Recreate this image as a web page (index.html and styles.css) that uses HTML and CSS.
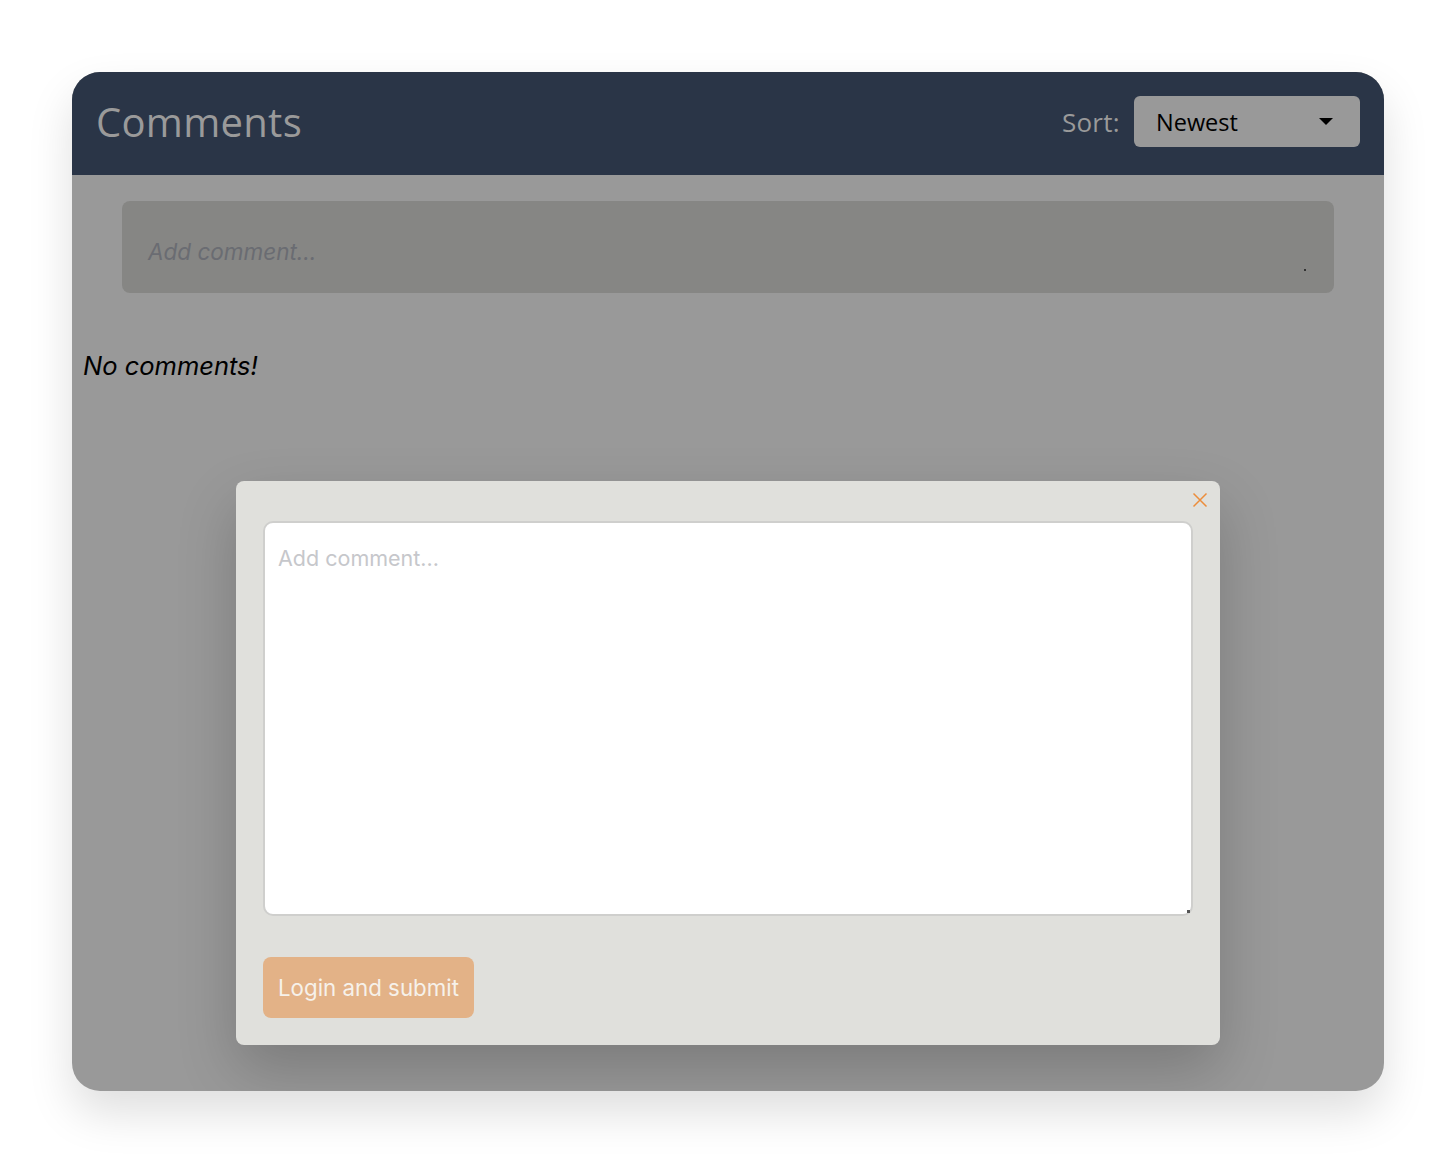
FILE: index.html
```html
<!DOCTYPE html>
<html>
<head>
<meta charset="utf-8">
<link rel="stylesheet" href="styles.css">
</head>
<body>
<div class="window">
  <header class="header">
    <h1 class="title">Comments</h1>
    <div class="sort">
      <span class="sort-label">Sort:</span>
      <div class="select">
        <span>Newest</span>
        <span class="caret"></span>
      </div>
    </div>
  </header>
  <div class="content">
    <div class="add-box"><span class="add-ph">Add comment...</span><span class="grip"></span></div>
    <p class="empty">No comments!</p>
  </div>
  <div class="modal">
    <button class="close" aria-label="Close">
      <svg width="16" height="16" viewBox="0 0 16 16"><path d="M1.5 1.5 L14.5 14.5 M14.5 1.5 L1.5 14.5" stroke="#ec8d3b" stroke-width="1.5" fill="none"/></svg>
    </button>
    <div class="textarea"><span class="ta-ph">Add comment...</span><span class="ta-grip"></span></div>
    <button class="submit">Login and submit</button>
  </div>
</div>
</body>
</html>
```

FILE: styles.css
```css
html, body {
  margin: 0;
  padding: 0;
  background: #ffffff;
}
body {
  padding: 72px 0 73px;
  font-family: Inter, "Noto Sans", sans-serif;
}
.window {
  position: relative;
  width: 1312px;
  height: 1019px;
  margin: 0 auto;
  border-radius: 28px;
  overflow: hidden;
  background: #999999;
  box-shadow: 0 22px 45px rgba(0, 0, 0, 0.13);
}
.header {
  height: 103px;
  background: #2a3547;
  display: flex;
  align-items: center;
  justify-content: space-between;
  padding: 0 24px;
  box-sizing: border-box;
}
.title {
  margin: -4px 0 0;
  font-family: "Open Sans", "DejaVu Sans", sans-serif;
  font-weight: 400;
  font-size: 40px;
  color: #9a9a9a;
  letter-spacing: 0.3px;
}
.sort {
  display: flex;
  align-items: center;
  gap: 14px;
  margin-top: -4px;
}
.sort-label {
  font-family: "Open Sans", "DejaVu Sans", sans-serif;
  font-size: 26px;
  color: #9a9a9a;
  letter-spacing: 0.3px;
}
.select {
  width: 226px;
  height: 51px;
  box-sizing: border-box;
  background: #999999;
  border-radius: 6px;
  display: flex;
  align-items: center;
  justify-content: space-between;
  padding: 0 27px 0 22px;
  font-family: "Open Sans", "DejaVu Sans", sans-serif;
  font-size: 23.5px;
  color: #000;
}
.caret {
  width: 0;
  height: 0;
  border-left: 7px solid transparent;
  border-right: 7px solid transparent;
  border-top: 7px solid #000;
}
.content {
  padding: 26px 50px 0;
}
.add-box {
  position: relative;
  height: 92px;
  background: #868684;
  border-radius: 8px;
  display: flex;
  align-items: center;
  padding: 8px 0 0 26px;
  box-sizing: border-box;
}
.add-ph {
  font-style: italic;
  font-size: 22.5px;
  color: #6a6c72;
}
.grip {
  position: absolute;
  right: 28px;
  bottom: 22px;
  width: 2px;
  height: 2px;
  background: #333;
}
.empty {
  margin: 57px 0 0 -39px;
  font-style: italic;
  font-size: 25.5px;
  color: #000;
}
.modal {
  position: absolute;
  left: 164px;
  top: 409px;
  width: 984px;
  height: 564px;
  box-sizing: border-box;
  background: #e0e0dc;
  border-radius: 8px;
  padding: 40px 27px 27px;
  display: flex;
  flex-direction: column;
  align-items: flex-start;
  box-shadow: 0 25px 60px rgba(0, 0, 0, 0.2);
}
.close {
  position: absolute;
  top: 11px;
  right: 12px;
  width: 16px;
  height: 16px;
  padding: 0;
  border: 0;
  background: none;
}
.close svg { display: block; }
.textarea {
  position: relative;
  width: 930px;
  height: 395px;
  box-sizing: border-box;
  background: #ffffff;
  border: 2px solid #cfcfcd;
  border-radius: 10px;
  padding: 22px 13px;
}
.ta-ph {
  font-size: 21.5px;
  color: #c6c7cb;
}
.ta-grip {
  position: absolute;
  right: 1px;
  bottom: 1px;
  width: 3px;
  height: 3px;
  background: #555;
}
.submit {
  margin-top: 41px;
  height: 61px;
  padding: 0 15px;
  border: 0;
  border-radius: 8px;
  background: #e3b287;
  color: #f6f1ea;
  font-family: Inter, "Noto Sans", sans-serif;
  font-size: 22.3px;
}
```
